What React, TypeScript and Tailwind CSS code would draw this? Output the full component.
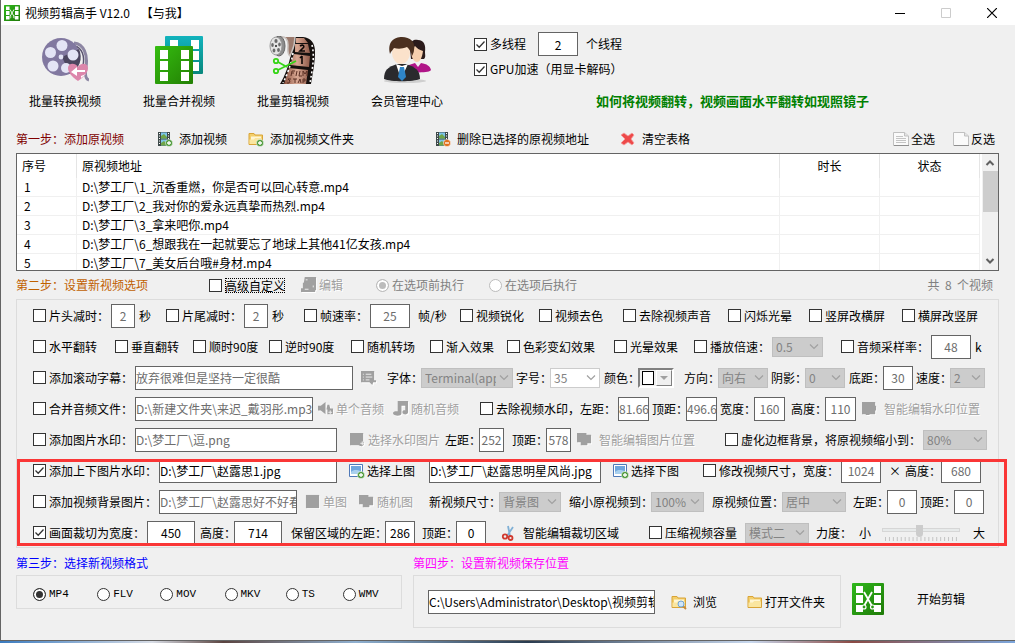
import type { ReactNode } from "react";
import clsx from "clsx";

/* ---------- icons ---------- */

function LogoIcon({ className }: { className?: string }) {
  return (
    <svg viewBox="0 0 32 32" className={className} aria-hidden="true">
      <defs>
        <linearGradient id="logo" x1="0" y1="0" x2="1" y2="1">
          <stop offset="0" stopColor="#2fb81c" />
          <stop offset="1" stopColor="#1f7a08" />
        </linearGradient>
      </defs>
      <rect width="32" height="32" rx="1" fill="url(#logo)" />
      <path d="M4 3h7v7H4zM4 12h7v8H4zM4 22h7v7H4zM22 3h7v7h-7zM22 12h7v8h-7zM22 22h7v7h-7z" fill="#fff" />
      <path d="M12 9l8 14M20 9l-8 14" stroke="#fff" strokeWidth="1.8" fill="none" />
      <circle cx="12" cy="24" r="2" fill="#2a9a14" stroke="#fff" strokeWidth="1.2" />
      <circle cx="20.5" cy="24" r="2" fill="#2a9a14" stroke="#fff" strokeWidth="1.2" />
    </svg>
  );
}

function ReelIcon() {
  return (
    <svg viewBox="0 0 48 48" className="size-12" aria-hidden="true">
      <path d="M33 7c10 1 14 12 12 24-1 6-1 12 3 13" fill="none" stroke="#8d86a3" strokeWidth="3" />
      <path d="M34 10c7 2 10 10 8 20" fill="none" stroke="#5b5470" strokeWidth="1.5" />
      <circle cx="20" cy="21" r="19" fill="#8178a0" />
      <path d="M21 21 38 13a19 19 0 0 1-9 25z" fill="#4c4660" />
      <g fill="#e3e4f5">
        <circle cx="21" cy="9.5" r="5.5" />
        <circle cx="9.5" cy="16.5" r="5.5" />
        <circle cx="12" cy="30" r="5.5" />
        <circle cx="25" cy="32" r="5" />
        <circle cx="32" cy="19" r="5.5" />
        <circle cx="20" cy="21" r="2.4" />
      </g>
      <path d="M37 45C30 40 27 36 27 32c0-5 7-6 10-1 3-5 10-4 10 1 0 4-3 8-10 13z" fill="#dc86ab" />
      <path d="M30 36l6-5v3h8v2h-8v4zM45 38l-5 4v-2" fill="#fff" />
    </svg>
  );
}

function MergeIcon() {
  return (
    <svg viewBox="0 0 48 48" className="size-12" aria-hidden="true">
      <defs>
        <linearGradient id="teal" x1="0" y1="0" x2="0" y2="1">
          <stop offset="0" stopColor="#12b3bd" />
          <stop offset="1" stopColor="#08877c" />
        </linearGradient>
        <linearGradient id="green" x1="0" y1="0" x2="1" y2="1">
          <stop offset="0" stopColor="#35bd10" />
          <stop offset="1" stopColor="#238004" />
        </linearGradient>
      </defs>
      <rect x="10" width="38" height="38" rx="1" fill="url(#teal)" />
      <path d="M15 4h8v9h-8zM36 4h8v9h-8zM36 15h8v9h-8zM36 26h8v9h-8z" fill="#fff" />
      <rect y="10" width="38" height="38" rx="1" fill="url(#green)" />
      <path d="M5 14h8v9H5zM5 25h8v9H5zM5 36h8v9H5zM26 14h8v9h-8zM26 25h8v9h-8zM26 36h8v9h-8z" fill="#fff" />
    </svg>
  );
}

function FilmCutIcon() {
  return (
    <svg viewBox="0 0 48 48" className="size-12" aria-hidden="true">
      <defs>
        <linearGradient id="frame" x1="0" y1="0" x2="1" y2="0">
          <stop offset="0" stopColor="#8a5240" />
          <stop offset="0.5" stopColor="#d9a893" />
          <stop offset="1" stopColor="#8f5b4a" />
        </linearGradient>
      </defs>
      {/* strip */}
      <path d="M24 1h10c8 1 12 6 12 15 0 11-2 20-4 32H11c5-8 9-19 11-31z" fill="#15100e" />
      <path d="M27 2h8l4 5H27zM26 8h13l2 9-15-1zM25 18l16 2-1 11-19-2zM20 32l19 2-2 14H15z" fill="url(#frame)" />
      <path d="M24 17c-2 12-6 22-10 30M43 9c3 12 0 26-2 38" fill="none" stroke="#fff" strokeWidth="1.6" strokeDasharray="2 2.4" />
      <path d="M31 10c3-2 5 0 3 2l-3 3h5M33 20v8M31 22l2-2" stroke="#0c0706" strokeWidth="1.6" fill="none" />
      <path d="M23 35l-1 5M23 35h3M23 37h2M28 35l-1 5M31 35l-1 5h3M34 40v-5l2 3 2-3v5M22 43h-3l2 2-1 2h-2M24 43h4M26 43v4M29 47l2-4 1 4M34 47v-4h2v2h-2" stroke="#5b3025" fill="none" />
      {/* reel and loose end */}
      <path d="M11 1c6-1 8 3 8 8s-1 9 2 11c2-5 5-9 5-19" fill="#9b7a6d" stroke="#c9c2be" strokeWidth="1.5" />
      <ellipse cx="10" cy="10" rx="6" ry="10" fill="#8c8c8c" stroke="#666" />
      <ellipse cx="7" cy="10" rx="6" ry="9" fill="#e4e4e4" stroke="#999" />
      <g fill="#6a6a6a">
        <ellipse cx="7" cy="5" rx="1.6" ry="2" />
        <ellipse cx="3.5" cy="9" rx="1.3" ry="2" />
        <ellipse cx="5" cy="14.5" rx="1.4" ry="2" />
        <ellipse cx="9.5" cy="14" rx="1.4" ry="2" />
        <ellipse cx="10.5" cy="8.500" rx="1.3" ry="2" />
      </g>
      <circle cx="7" cy="10" r="1" fill="#222" />
      <g fill="none" stroke="#35d415" strokeWidth="1.8">
        <path d="M9 26l9 5M9 34l18-9" />
        <circle cx="7" cy="25" r="2.2" />
        <circle cx="7" cy="35" r="2.2" />
      </g>
    </svg>
  );
}

function MembersIcon() {
  return (
    <svg viewBox="0 0 48 48" className="size-12" aria-hidden="true">
      <ellipse cx="22" cy="45" rx="21" ry="2" fill="#cfcfcf" />
      <path d="M27 13c-1-8 4-10 8-9 6 0 8 5 7 12 0 3 1 5-1 7H28z" fill="#2b1b1b" />
      <path d="M28 14c0 8 3 12 6 12s5-4 6-11c-4-1-6-3-8-5z" fill="#f6cfae" />
      <path d="M26 36V29l6-2 3 4 3-4c6 1 9 3 10 7-1 2-8 3-22 2z" fill="#b01588" />
      <ellipse cx="18" cy="17" rx="9" ry="11" fill="#fbe2cb" />
      <path d="M7 18C4 6 11 1 19 1s14 5 12 13c0 2-1 4-2 6-1-5-3-7-5-9-5 2-9 2-13 1-1 2-3 3-4 6z" fill="#4b3020" />
      <path d="M1 43c0-9 4-12 13-15h9c9 3 14 6 14 15-7 3-29 3-36 0z" fill="#2a2a2d" />
      <path d="M13 28l5 15 7-15-6 2z" fill="#fff" />
      <path d="M17 31h4l2 10-4 4-4-4z" fill="#2f86c9" />
    </svg>
  );
}

type BadgeKind = "add" | "remove";

function Badge({ kind }: { kind: BadgeKind }) {
  return (
    <g>
      <circle cx="12" cy="12" r="3.6" fill={kind === "add" ? "#4f9a3c" : "#e0701c"} stroke="#fff" strokeWidth="0.5" />
      <path d={kind === "add" ? "M10 12h4M12 10v4" : "M10 12h4"} stroke="#fff" strokeWidth="1.3" />
    </g>
  );
}

function FilmIcon({ kind }: { kind: BadgeKind }) {
  return (
    <svg viewBox="0 0 16 16" className="size-4 shrink-0" aria-hidden="true">
      <path d="M1 1h12v14H1z" fill="#3e4a4a" />
      <path d="M4 1.5h6v6H4zM4 8.5h6v6H4z" fill="#7cc4e8" />
      <path d="M4 5l3-2 3 3v1.5H4zM4 12l3-2 3 3v1.5H4z" fill="#6fa548" />
      <path d="M2.5 2v12M11.5 2v12" stroke="#fff" strokeDasharray="1 1.5" />
      <Badge kind={kind} />
    </svg>
  );
}

function FolderIcon({ badge }: { badge?: "add" | "search" }) {
  return (
    <svg viewBox="0 0 16 16" className="size-4 shrink-0" aria-hidden="true">
      <path d="M1 2.5h5l1 1.5h7.5v9.5H1z" fill="#f3cf6b" stroke="#d9a437" />
      <path d="M3 5.5h10v2H7L6 9H3z" fill="#fff6d4" />
      <path d="M1.5 8.5H6l1-1h7V13H1.5z" fill="#fae6a0" />
      {badge === "add" && <Badge kind="add" />}
      {badge === "search" && (
        <g>
          <path d="M12 12l3 3" stroke="#c58a3a" strokeWidth="1.8" />
          <circle cx="10" cy="10" r="3" fill="#cfe6fa" stroke="#6ea3d8" />
        </g>
      )}
    </svg>
  );
}

function PictureIcon() {
  return (
    <svg viewBox="0 0 16 16" className="size-4 shrink-0" aria-hidden="true">
      <path d="M.5 1.5h13v12H.5z" fill="#fff" stroke="#4f79b8" />
      <path d="M2 3h10v8H2z" fill="#6ea6dd" />
      <path d="M2 9c3-3 6-2 10-1v3H2z" fill="#a9d0ee" />
      <Badge kind="add" />
    </svg>
  );
}

function PageIcon({ lines }: { lines?: boolean }) {
  return (
    <svg viewBox="0 0 16 14" className="h-3.5 w-4 shrink-0" aria-hidden="true">
      <path d="M.5 .5h11l4 3.5v9.5H.5z" fill="#fafafa" stroke="#c0c0c0" />
      <path d="M11.5 .5v3.5h4" fill="#e4e4e4" stroke="#c0c0c0" />
      <path d="M1 13.5h15" stroke="#8f8f8f" />
      {lines && <path d="M3 4.5h7M3 6.5h10M3 8.5h10M3 10.5h10" stroke="#c4c4c4" />}
    </svg>
  );
}

function ClearIcon() {
  return (
    <svg viewBox="0 0 16 16" className="size-4 shrink-0" aria-hidden="true">
      <path d="M1 4l3-2 4 3 4-3 2 2-3 4 3 4-2 2-4-3-4 3-3-2 4-4z" fill="#ee4a4a" stroke="#f59a9a" strokeWidth="0.8" />
    </svg>
  );
}

function ScissorsIcon() {
  return (
    <svg viewBox="0 0 16 16" className="size-4 shrink-0" aria-hidden="true">
      <path d="M7 1l2 10M12 2L6 11" stroke="#7fb0d6" strokeWidth="1.8" />
      <circle cx="4" cy="11.5" r="2.2" fill="none" stroke="#d03a30" strokeWidth="1.8" />
      <circle cx="9.5" cy="13" r="2" fill="none" stroke="#d03a30" strokeWidth="1.8" />
    </svg>
  );
}

/* flat grey shapes that stand for the disabled tool icons */
const greyShapes = {
  edit: "M4 0h12v14h-1v2H0v-4h2V6h1z",
  subtitle: "M0 1h14v10h2v2h-3l-1 3-3-3H0z",
  speaker: "M0 5h3l5-4v13l-5-4H0zM10 4h2l1 4h3v6h-6V9H9z",
  music: "M5 0h11v12c0 3-6 3-6 0s3-2 3-2V5H9v8c0 4-9 3-9 0s5-2 5-2z",
  stack: "M0 1h10v2h5v9h-4v2H4v-3H0z",
  square: "M1 1h14v14H1z",
  block: "M0 1h14v4h1v5h-1v4H8v1H4v-1H0z",
  image: "M0 1h14v9c2 2 0 6-3 5l-2-1H0z",
};

function GreyIcon({ name }: { name: keyof typeof greyShapes }) {
  return (
    <svg viewBox="0 0 17 17" className="size-4 shrink-0" aria-hidden="true">
      <path d={greyShapes[name]} fill="#fff" transform="translate(1 1)" />
      <path d={greyShapes[name]} fill="#a0a0a0" />
      {name === "edit" && <path d="M5 3h2M13 9v2M4 13h4" stroke="#f0f0f0" />}
      {name === "subtitle" && <path d="M2 4.5h1M5 4.5h6M2 7.5h1M5 7.5h7M2 10.5h1M5 10.5h4" stroke="#f0f0f0" />}
      {(name === "image" || name === "speaker") && <path d="M11 12h4M13 10v4" stroke="#f0f0f0" />}
    </svg>
  );
}

/* ---------- controls ---------- */

function Check({ children, checked, focused }: { children: string; checked?: boolean; focused?: boolean }) {
  return (
    <label className="mr-0.5 flex shrink-0 items-center gap-[3px] whitespace-nowrap">
      <span className="relative size-[13px] shrink-0">
        <input
          type="checkbox"
          defaultChecked={checked}
          className="peer block size-[13px] appearance-none border border-[#333] bg-white"
        />
        <svg viewBox="0 0 13 13" className="pointer-events-none absolute inset-0 hidden size-[13px] peer-checked:block">
          <path d="M2.5 6.5l2.7 2.7L10.5 3.5" fill="none" stroke="#333" strokeWidth="1.3" />
        </svg>
      </span>
      <span className={clsx(focused && "outline-1 -outline-offset-1 outline-dotted outline-black leading-[15px]")}>{children}</span>
    </label>
  );
}

function Radio({ name, children, checked, disabled }: { name: string; children: string; checked?: boolean; disabled?: boolean }) {
  return (
    <label className={clsx("flex items-center gap-[3px] whitespace-nowrap", disabled && "text-[#808080]")}>
      <input
        type="radio"
        name={name}
        defaultChecked={checked}
        disabled={disabled}
        className="size-[13px] shrink-0 appearance-none rounded-full border border-[#333] bg-white checked:bg-[#333] checked:shadow-[inset_0_0_0_2px_#fff] disabled:border-[#bcbcbc] disabled:checked:bg-[#bcbcbc]"
      />
      {children}
    </label>
  );
}

function TextBox({ label, value, className, active }: { label: string; value: string; className: string; active?: boolean }) {
  return (
    <input
      type="text"
      aria-label={label}
      defaultValue={value}
      className={clsx("h-6 shrink-0 border border-[#646464] bg-white", active ? "text-black" : "text-[#6d6d6d]", className)}
    />
  );
}

function Select({ label, value, className, light }: { label: string; value: string; className: string; light?: boolean }) {
  return (
    <span className={clsx("relative h-5 shrink-0", className)}>
      <select
        aria-label={label}
        disabled
        className={clsx(
          "block h-5 w-full appearance-none overflow-hidden border pr-4 pl-[3px] text-[#838383] opacity-100",
          light ? "border-[#ccc] bg-white" : "border-[#bfbfbf] bg-[#ccc]",
        )}
      >
        <option>{value}</option>
      </select>
      <svg viewBox="0 0 10 6" className="pointer-events-none absolute top-[7px] right-1 h-1.5 w-2.5">
        <path d="M1 .5l4 4 4-4" fill="none" stroke="#a0a0a0" strokeWidth="1.2" />
      </svg>
    </span>
  );
}

function Caption({ children }: { children: string }) {
  return <span className="-mr-0.5 shrink-0 whitespace-nowrap">{children}</span>;
}

function IconButton({ icon, children, disabled, wide }: { icon: ReactNode; children?: string; disabled?: boolean; wide?: boolean }) {
  return (
    <button
      type="button"
      disabled={disabled}
      aria-label={children ?? "编辑字幕"}
      className={clsx(
        "flex items-center whitespace-nowrap",
        wide ? "gap-1.5" : "gap-0.5",
        disabled && "text-[#a0a0a0] [text-shadow:1px_1px_0_#fff]",
      )}
    >
      {icon}
      {children}
    </button>
  );
}

function Row({ cols, children }: { cols: string; children: ReactNode }) {
  return <div className={clsx("grid h-[31px] items-center pl-4 *:min-w-0", cols)}>{children}</div>;
}

function Cell({ children }: { children: ReactNode }) {
  return <div className="flex items-center">{children}</div>;
}

/* ---------- sections ---------- */

function TitleBar() {
  return (
    <header className="flex h-[25px] items-center bg-white pl-[3px]">
      <LogoIcon className="size-4" />
      <h1 className="ml-[5px] flex-1 whitespace-pre">视频剪辑高手 V12.0    【与我】</h1>
      <button type="button" aria-label="最小化" className="flex w-[46px] justify-center">
        <svg viewBox="0 0 10 10" className="size-2.5"><path d="M0 5.5h10" stroke="#000" /></svg>
      </button>
      <button type="button" aria-label="最大化" disabled className="flex w-[46px] justify-center">
        <svg viewBox="0 0 10 10" className="size-2.5"><path d="M.5.5h9v9h-9z" fill="none" stroke="#ccc" /></svg>
      </button>
      <button type="button" aria-label="关闭" className="flex w-[46px] justify-center">
        <svg viewBox="0 0 10 10" className="size-2.5"><path d="M0 0l10 10M10 0L0 10" stroke="#000" strokeWidth="1.2" /></svg>
      </button>
    </header>
  );
}

const tools = [
  { name: "批量转换视频", icon: <ReelIcon /> },
  { name: "批量合并视频", icon: <MergeIcon /> },
  { name: "批量剪辑视频", icon: <FilmCutIcon /> },
  { name: "会员管理中心", icon: <MembersIcon /> },
];

function Tools() {
  return (
    <section className="flex h-[100px] pl-[7px]">
      {tools.map((tool) => (
        <button key={tool.name} type="button" className="flex w-[114px] flex-col items-center gap-2 pt-[11px]">
          {tool.icon}
          {tool.name}
        </button>
      ))}
      <div className="flex-1 pt-[7px] pl-[10px]">
        <div className="flex h-6 items-center">
          <Check checked>多线程</Check>
          <TextBox label="线程数" value="2" active className="ml-2.5 w-10 text-center" />
          <span className="ml-2">个线程</span>
        </div>
        <div className="flex h-[26px] items-center">
          <Check checked>GPU加速（用显卡解码）</Check>
        </div>
        <a href="#help" className="mt-[9px] ml-[122px] block text-[13px] leading-5 font-bold whitespace-nowrap text-[#008000]">
          如何将视频翻转，视频画面水平翻转如现照镜子
        </a>
      </div>
    </section>
  );
}

const videos = [
  "D:\\梦工厂\\1_沉香重燃，你是否可以回心转意.mp4",
  "D:\\梦工厂\\2_我对你的爱永远真挚而热烈.mp4",
  "D:\\梦工厂\\3_拿来吧你.mp4",
  "D:\\梦工厂\\6_想跟我在一起就要忘了地球上其他41亿女孩.mp4",
  "D:\\梦工厂\\7_美女后台哦#身材.mp4",
];

function VideoTable() {
  return (
    <div className="mr-4 ml-[15px] flex h-[118px] border border-[#646464] bg-white">
      <div className="min-w-0 flex-1 overflow-hidden pr-0.5">
        <table className="w-full table-fixed border-separate border-spacing-0">
          <thead>
            <tr className="h-6 *:border-r *:border-[#e5e5e5] *:p-0 *:font-normal">
              <th className="w-[60px]"><span className="block pl-[5px] text-left">序号</span></th>
              <th><span className="block pl-[5px] text-left">原视频地址</span></th>
              <th className="w-[100px]">时长</th>
              <th className="w-[100px]">状态</th>
            </tr>
          </thead>
          <tbody>
            {videos.map((path, i) => (
              <tr key={path} className="h-[19px] leading-[18px] *:border-r *:border-b *:border-[#f0f0f0] *:py-0">
                <td className="pl-[7px]">{i + 1}</td>
                <td className="pl-[5px]">{path}</td>
                <td />
                <td />
              </tr>
            ))}
          </tbody>
        </table>
      </div>
      <div className="flex w-4 flex-col items-center bg-[#f0f0f0]" aria-hidden="true">
        <svg viewBox="0 0 16 17" className="h-[17px] w-4"><path d="M4.5 11l3.5-3.5 3.5 3.5" fill="none" stroke="#606060" strokeWidth="2" /></svg>
        <div className="h-[41px] w-[15px] bg-[#cdcdcd]" />
        <svg viewBox="0 0 16 17" className="mt-auto h-[17px] w-4"><path d="M4.5 6l3.5 3.5 3.5-3.5" fill="none" stroke="#606060" strokeWidth="2" /></svg>
      </div>
    </div>
  );
}

function ColorPicker() {
  return (
    <button type="button" aria-label="颜色" className="flex h-5 w-9 shrink-0 items-center justify-between border-2 border-t-[#808080] border-r-white border-b-white border-l-[#808080] bg-[#f0f0f0] pl-0.5">
      <span className="h-3.5 w-3 border border-black bg-white" />
      <span className="flex h-4 w-4 items-center justify-center border border-t-white border-r-[#808080] border-b-[#808080] border-l-white">
        <svg viewBox="0 0 8 4" className="h-1 w-2"><path d="M0 0h8L4 4z" fill="#a0a0a0" /></svg>
      </span>
    </button>
  );
}

function Options() {
  return (
    <section className="mr-4 ml-[15px] border border-[#dcdcdc]">
      <Row cols="grid-cols-[133fr_138fr_156fr_79fr_84fr_105fr_81fr_93fr_96fr]">
        <Cell><Check>片头减时：</Check><TextBox label="片头减时" value="2" className="w-6 text-center" /><span className="ml-1">秒</span></Cell>
        <Cell><Check>片尾减时：</Check><TextBox label="片尾减时" value="2" className="w-6 text-center" /><span className="ml-1">秒</span></Cell>
        <Cell><Check>帧速率：</Check><TextBox label="帧速率" value="25" className="w-10 text-center" /><span className="ml-2">帧/秒</span></Cell>
        <Check>视频锐化</Check>
        <Check>视频去色</Check>
        <Check>去除视频声音</Check>
        <Check>闪烁光晕</Check>
        <Check>竖屏改横屏</Check>
        <Check>横屏改竖屏</Check>
      </Row>
      <Row cols="grid-cols-[82fr_78fr_76fr_82fr_79fr_77fr_107fr_80fr_147fr_157fr]">
        <Check>水平翻转</Check>
        <Check>垂直翻转</Check>
        <Check>顺时90度</Check>
        <Check>逆时90度</Check>
        <Check>随机转场</Check>
        <Check>渐入效果</Check>
        <Check>色彩变幻效果</Check>
        <Check>光晕效果</Check>
        <Cell><Check>播放倍速：</Check><Select label="播放倍速" value="0.5" className="w-[51px]" /></Cell>
        <Cell><Check>音频采样率：</Check><TextBox label="音频采样率" value="48" className="w-10 text-center" /><span className="ml-1">k</span></Cell>
      </Row>
      <Row cols="grid-cols-[328fr_26fr_129fr_88fr_80fr_87fr_78fr_67fr_82fr]">
        <Cell><Check>添加滚动字幕：</Check><TextBox label="滚动字幕" value="放弃很难但是坚持一定很酷" className="w-[218px]" /></Cell>
        <IconButton disabled icon={<GreyIcon name="subtitle" />} />
        <Cell><Caption>字体：</Caption><Select label="字体" value="Terminal(app)" className="w-[92px]" /></Cell>
        <Cell><Caption>字号：</Caption><Select label="字号" value="35" light className="w-[50px]" /></Cell>
        <Cell><Caption>颜色：</Caption><ColorPicker /></Cell>
        <Cell><Caption>方向：</Caption><Select label="方向" value="向右" className="w-[50px]" /></Cell>
        <Cell><Caption>阴影：</Caption><Select label="阴影" value="0" className="w-10" /></Cell>
        <Cell><Caption>底距：</Caption><TextBox label="底距" value="30" className="w-[30px] text-center" /></Cell>
        <Cell><Caption>速度：</Caption><Select label="速度" value="2" className="w-[35px]" /></Cell>
      </Row>
      <Row cols="grid-cols-[285fr_75fr_87fr_172fr_68fr_71fr_71fr_136fr]">
        <Cell><Check>合并音频文件：</Check><TextBox label="音频文件" value="D:\新建文件夹\来迟_戴羽彤.mp3" className="w-[178px]" /></Cell>
        <IconButton disabled icon={<GreyIcon name="speaker" />}>单个音频</IconButton>
        <IconButton disabled icon={<GreyIcon name="music" />}>随机音频</IconButton>
        <Cell><Check>去除视频水印，左距：</Check><TextBox label="水印左距" value="81.66" className="w-[31px]" /></Cell>
        <Cell><Caption>顶距：</Caption><TextBox label="水印顶距" value="496.6" className="w-[31px]" /></Cell>
        <Cell><Caption>宽度：</Caption><TextBox label="水印宽度" value="160" className="w-[31px] text-center" /></Cell>
        <Cell><Caption>高度：</Caption><TextBox label="水印高度" value="110" className="w-[31px] text-center" /></Cell>
        <IconButton disabled wide icon={<GreyIcon name="block" />}>智能编辑水印位置</IconButton>
      </Row>
      <Row cols="grid-cols-[317fr_95fr_67fr_65fr_148fr_273fr]">
        <Cell><Check>添加图片水印：</Check><TextBox label="图片水印" value="D:\梦工厂\逗.png" className="w-[202px]" /></Cell>
        <IconButton disabled icon={<GreyIcon name="image" />}>选择水印图片</IconButton>
        <Cell><Caption>左距：</Caption><TextBox label="图片左距" value="252" className="w-[25px] text-center" /></Cell>
        <Cell><Caption>顶距：</Caption><TextBox label="图片顶距" value="578" className="w-[25px] text-center" /></Cell>
        <IconButton disabled wide icon={<GreyIcon name="stack" />}>智能编辑图片位置</IconButton>
        <Cell><Check>虚化边框背景，将原视频缩小到：</Check><Select label="缩小到" value="80%" className="w-16" /></Cell>
      </Row>

      <div className="relative -mb-px">
        <Row cols="grid-cols-[316fr_80fr_184fr_90fr_186fr_16fr_93fr]">
          <Cell><Check checked>添加上下图片水印：</Check><TextBox label="上图" value="D:\梦工厂\赵露思1.jpg" active className="w-[178px]" /></Cell>
          <IconButton icon={<PictureIcon />}>选择上图</IconButton>
          <TextBox label="下图" value="D:\梦工厂\赵露思明星风尚.jpg" active className="w-[172px]" />
          <IconButton icon={<PictureIcon />}>选择下图</IconButton>
          <Cell><Check>修改视频尺寸，宽度：</Check><TextBox label="视频宽度" value="1024" className="w-10 text-center" /></Cell>
          <span>×</span>
          <Cell><span>高度：</span><TextBox label="视频高度" value="680" className="w-10 text-center" /></Cell>
        </Row>
        <Row cols="grid-cols-[272fr_54fr_70fr_140fr_143fr_141fr_67fr_78fr]">
          <Cell><Check>添加视频背景图片：</Check><TextBox label="背景图片" value="D:\梦工厂\赵露思好不好看.jpg" className="w-[138px]" /></Cell>
          <IconButton disabled icon={<GreyIcon name="square" />}>单图</IconButton>
          <IconButton disabled icon={<GreyIcon name="stack" />}>随机图</IconButton>
          <Cell><Caption>新视频尺寸：</Caption><Select label="新视频尺寸" value="背景图" className="w-[62px]" /></Cell>
          <Cell><Caption>缩小原视频到：</Caption><Select label="缩小原视频到" value="100%" className="w-[53px]" /></Cell>
          <Cell><Caption>原视频位置：</Caption><Select label="原视频位置" value="居中" className="w-16" /></Cell>
          <Cell><Caption>左距：</Caption><TextBox label="背景左距" value="0" className="w-[30px] text-center" /></Cell>
          <Cell><Caption>顶距：</Caption><TextBox label="背景顶距" value="0" className="w-[30px] text-center" /></Cell>
        </Row>
        <Row cols="grid-cols-[167fr_91fr_131fr_79fr_148fr_167fr_43fr_23fr_91fr_25fr]">
          <Cell><Check checked>画面裁切为宽度：</Check><TextBox label="裁切宽度" value="450" active className="w-12 text-center" /></Cell>
          <Cell><Caption>高度：</Caption><TextBox label="裁切高度" value="714" active className="w-12 text-center" /></Cell>
          <Cell><Caption>保留区域的左距：</Caption><TextBox label="裁切左距" value="286" active className="w-[30px] text-center" /></Cell>
          <Cell><Caption>顶距：</Caption><TextBox label="裁切顶距" value="0" active className="w-[30px] text-center" /></Cell>
          <IconButton wide icon={<ScissorsIcon />}>智能编辑裁切区域</IconButton>
          <Cell><Check>压缩视频容量</Check><Select label="压缩模式" value="模式二" className="ml-1.5 w-16" /></Cell>
          <Caption>力度：</Caption>
          <span>小</span>
          <div className="flex w-[78px] flex-col items-center gap-px">
            <input
              type="range"
              aria-label="力度"
              disabled
              defaultValue={48}
              className="h-3 w-full appearance-none bg-transparent [&::-webkit-slider-runnable-track]:h-1 [&::-webkit-slider-runnable-track]:border [&::-webkit-slider-runnable-track]:border-[#d6d6d6] [&::-webkit-slider-runnable-track]:bg-[#e7eaea] [&::-webkit-slider-thumb]:-mt-1 [&::-webkit-slider-thumb]:h-3 [&::-webkit-slider-thumb]:w-[7px] [&::-webkit-slider-thumb]:appearance-none [&::-webkit-slider-thumb]:rounded-b [&::-webkit-slider-thumb]:bg-[#ccc]"
            />
            <svg viewBox="0 0 72 4" className="h-1 w-[72px]" aria-hidden="true">
              <path d="M0 2h72" stroke="#c4c4c4" strokeWidth="4" strokeDasharray="1 2.94" />
            </svg>
          </div>
          <span>大</span>
        </Row>
        <div className="pointer-events-none absolute top-1 -right-[9px] bottom-0.5 left-0 border-3 border-[#fa3636]" />
      </div>
    </section>
  );
}

const formats = ["MP4", "FLV", "MOV", "MKV", "TS", "WMV"];

function Output() {
  return (
    <section className="grid grid-cols-[397fr_439fr_147fr] pt-0.5 pr-4 pb-3 pl-[15px]">
      <div className="pr-[11px]">
        <h2 className="leading-[25px] text-[#0000ff]">第三步：选择新视频格式</h2>
        <div className="grid h-[34px] grid-cols-[64fr_63fr_64fr_61fr_57fr_58fr] items-center border border-[#dcdcdc] pt-1 pl-4 font-['Liberation_Mono'] text-[11px]">
          {formats.map((f) => (
            <Radio key={f} name="format" checked={f === "MP4"}>{f}</Radio>
          ))}
        </div>
      </div>
      <div className="pr-[11px]">
        <h2 className="leading-[25px] text-[#ff00ff]">第四步：设置新视频保存位置</h2>
        <div className="flex h-[53px] items-center border border-[#dcdcdc] pl-3.5">
          <TextBox label="保存位置" value="C:\Users\Administrator\Desktop\视频剪辑" active className="mr-4 w-[227px]" />
          <IconButton wide icon={<FolderIcon badge="search" />}>浏览</IconButton>
          <span className="w-[30px]" />
          <IconButton icon={<FolderIcon />}>打开文件夹</IconButton>
        </div>
      </div>
      <button type="button" className="flex items-center gap-[33px] pt-5">
        <LogoIcon className="size-8" />
        开始剪辑
      </button>
    </section>
  );
}

export default function App() {
  return (
    <div className="overflow-x-hidden bg-[linear-gradient(90deg,#3b7bbf,#d8dde6_15%,#5b4440_22%,#8fb0d0_35%,#2a3c50_52%,#c8d8ee_74%,#8b4a44_84%,#7da7dd)] pb-0.5">
      <div className="border-b border-l border-[#646464] bg-[#f0f0f0] font-['Noto_Sans_CJK_SC',sans-serif] text-[12px] leading-[18px] text-black">
        <TitleBar />
        <Tools />
        <div className="grid h-7 grid-cols-[141fr_91fr_187fr_185fr_273fr_60fr_46fr] items-center pr-4 pl-[15px] *:min-w-0">
          <h2 className="text-[#800000]">第一步：添加原视频</h2>
          <IconButton wide icon={<FilmIcon kind="add" />}>添加视频</IconButton>
          <IconButton wide icon={<FolderIcon badge="add" />}>添加视频文件夹</IconButton>
          <IconButton wide icon={<FilmIcon kind="remove" />}>删除已选择的原视频地址</IconButton>
          <IconButton wide icon={<ClearIcon />}>清空表格</IconButton>
          <IconButton icon={<PageIcon lines />}>全选</IconButton>
          <IconButton icon={<PageIcon />}>反选</IconButton>
        </div>
        <VideoTable />
        <div className="grid h-7 grid-cols-[193fr_92fr_75fr_113fr_510fr] items-center pr-4 pl-[15px] *:min-w-0">
          <h2 className="text-[#c06000]">第二步：设置新视频选项</h2>
          <Check focused>高级自定义</Check>
          <IconButton disabled icon={<GreyIcon name="edit" />}>编辑</IconButton>
          <Radio name="order" checked disabled>在选项前执行</Radio>
          <div className="flex justify-between">
            <Radio name="order" disabled>在选项后执行</Radio>
            <span className="pr-1.5 whitespace-pre text-[#808080]">共  8  个视频</span>
          </div>
        </div>
        <Options />
        <Output />
      </div>
    </div>
  );
}
